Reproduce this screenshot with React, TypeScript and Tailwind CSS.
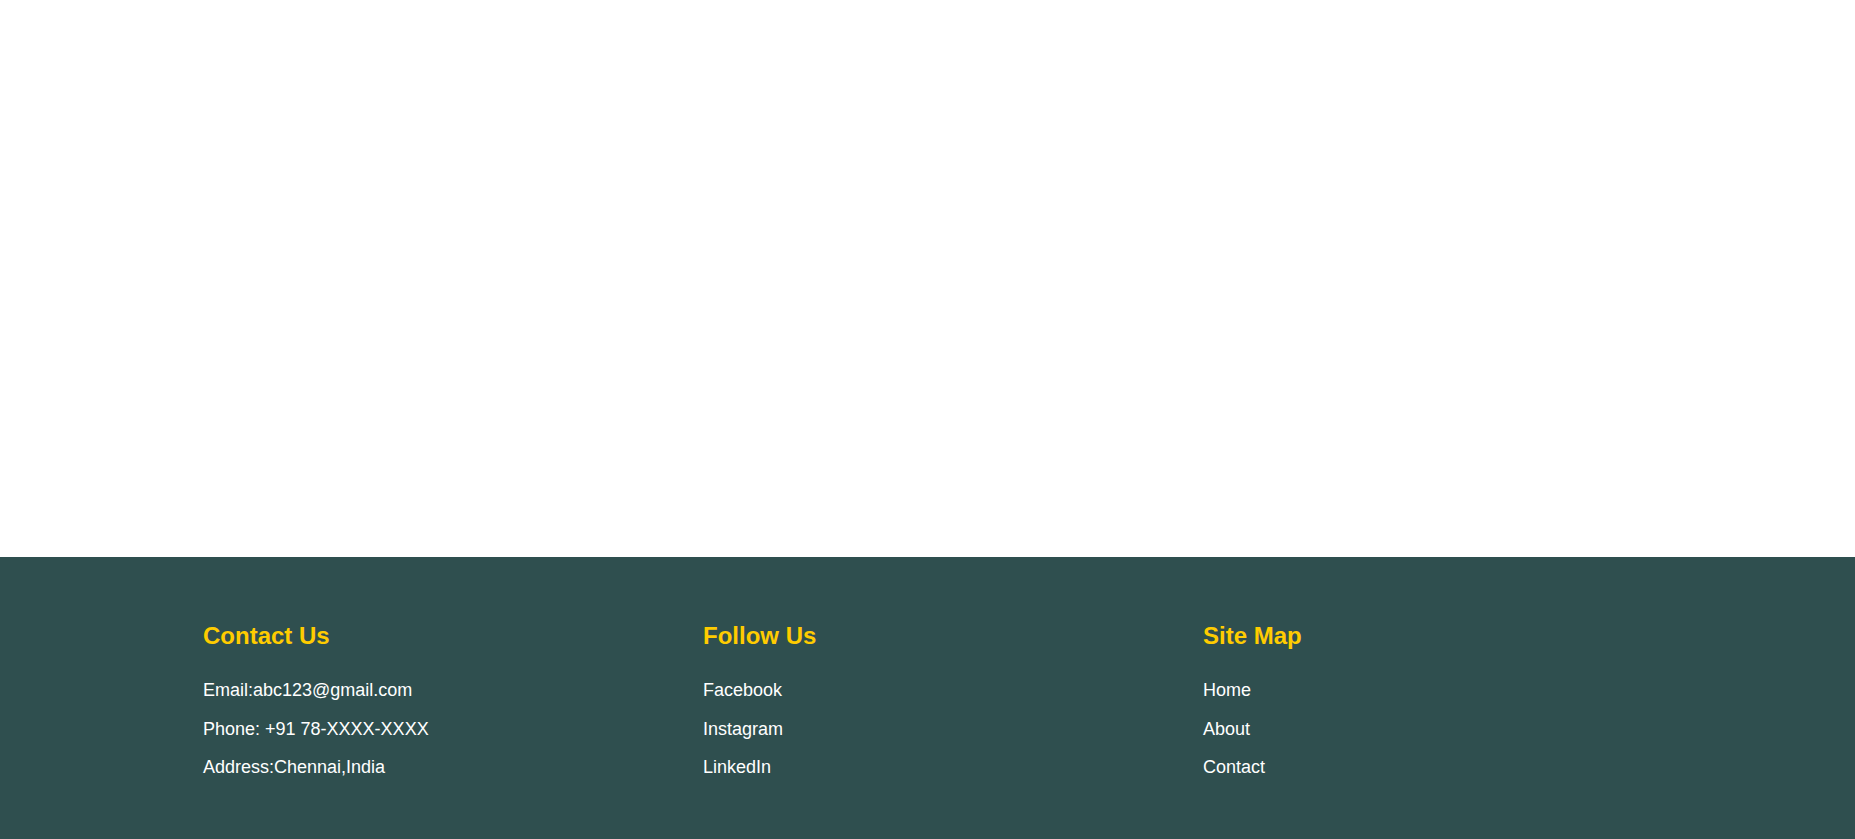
export default function App() {
  const cols = [
    { title: "Contact Us", items: ["Email:abc123@gmail.com", "Phone: +91 78-XXXX-XXXX", "Address:Chennai,India"] },
    { title: "Follow Us", items: ["Facebook", "Instagram", "LinkedIn"] },
    { title: "Site Map", items: ["Home", "About", "Contact"] },
  ];
  return (
    <div className="h-[839px] overflow-hidden bg-white flex flex-col" style={{ fontFamily: '"Liberation Sans", Arial, sans-serif' }}>
      <div className="h-[557px] shrink-0 bg-white" />
      <footer className="flex-1 bg-[#2f4f4f] pt-[65px]">
        <div className="pl-[203px] grid grid-cols-[500px_500px_500px]">
          {cols.map((c) => (
            <div key={c.title} className="flex flex-col">
              <h2 className="text-[24px] font-bold leading-[27px] text-[#ffcc00]">{c.title}</h2>
              <ul className="mt-[31px] flex flex-col gap-[18.5px]">
                {c.items.map((it) => (
                  <li key={it} className="text-[18px] leading-[20px] text-white">{it}</li>
                ))}
              </ul>
            </div>
          ))}
        </div>
      </footer>
    </div>
  );
}
